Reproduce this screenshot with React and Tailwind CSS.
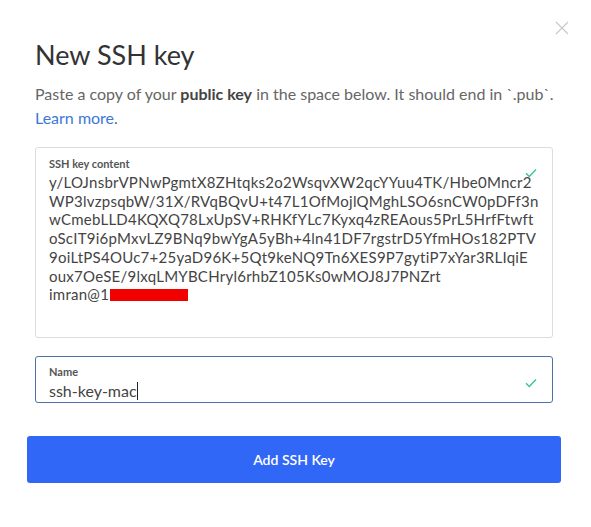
import React from "react";

const keyLines = [
  "y/LOJnsbrVPNwPgmtX8ZHtqks2o2WsqvXW2qcYYuu4TK/Hbe0Mncr2",
  "WP3lvzpsqbW/31X/RVqBQvU+t47L1OfMojlQMghLSO6snCW0pDFf3n",
  "wCmebLLD4KQXQ78LxUpSV+RHKfYLc7Kyxq4zREAous5PrL5HrfFtwft",
  "oScIT9i6pMxvLZ9BNq9bwYgA5yBh+4ln41DF7rgstrD5YfmHOs182PTV",
  "9oiLtPS4OUc7+25yaD96K+5Qt9keNQ9Tn6XES9P7gytiP7xYar3RLIqiE",
  "oux7OeSE/9lxqLMYBCHryl6rhbZ105Ks0wMOJ8J7PNZrt",
];

function Check() {
  return (
    <svg width="12" height="10" viewBox="0 0 12 10" fill="none">
      <path d="M1 5.2 L4.3 8.5 L11 1.5" stroke="#3cc48a" strokeWidth="1.4" />
    </svg>
  );
}

export default function App() {
  return (
    <div className="relative w-[591px] h-[527px] bg-white font-['Lato',sans-serif]">
      <button className="absolute left-[555px] top-[21px] text-[#c8c8c8]">
        <svg width="14" height="14" viewBox="0 0 14 14">
          <path d="M1 1 L13 13 M13 1 L1 13" stroke="currentColor" strokeWidth="1.1" />
        </svg>
      </button>
      <div className="pl-[35px] pr-[38px] pt-[38px]">
        <h1 className="text-[27px] leading-[34px] text-[#333]">New SSH key</h1>
        <p className="mt-[10px] text-[16px] leading-[24px] text-[#666] whitespace-nowrap">
          Paste a copy of your <span className="font-bold text-[#444]">public key</span> in the space below. It should end in `.pub`.
          <br />
          <span className="text-[#3b78d8]">Learn more</span>.
        </p>
        <div className="mt-[17px] relative h-[191px] rounded-[3px] border border-[#dcdcdc] pl-[13px] pt-[9px]">
          <div className="text-[11px] leading-[14px] font-bold text-[#555]">SSH key content</div>
          <div className="mt-[2px] text-[15px] tracking-[0.25px] leading-[18.7px] text-[#444] whitespace-pre">
            {keyLines.map((l) => (
              <div key={l}>{l}</div>
            ))}
            <div className="flex items-center">
              imran@1
              <span className="inline-block w-[78px] h-[12px] bg-[#f20000] ml-[1px]" />
            </div>
          </div>
          <div className="absolute right-[15px] top-[20px]">
            <Check />
          </div>
        </div>
        <div className="mt-[18px] relative h-[47px] rounded-[3px] border border-[#4a72a8] pl-[13px] pt-[8px]">
          <div className="text-[11px] leading-[14px] font-bold text-[#555]">Name</div>
          <div className="mt-[2px] text-[16px] leading-[20px] text-[#444] flex items-center">
            ssh-key-mac<span className="inline-block w-px h-[18px] bg-[#222]" />
          </div>
          <div className="absolute right-[15px] top-[21px]">
            <Check />
          </div>
        </div>
      </div>
      <div className="pl-[27px] pr-[30px] mt-[33px]">
        <button className="w-full h-[47px] rounded-[3px] bg-[#3067f7] text-white text-[14px] font-semibold">
          Add SSH Key
        </button>
      </div>
    </div>
  );
}
